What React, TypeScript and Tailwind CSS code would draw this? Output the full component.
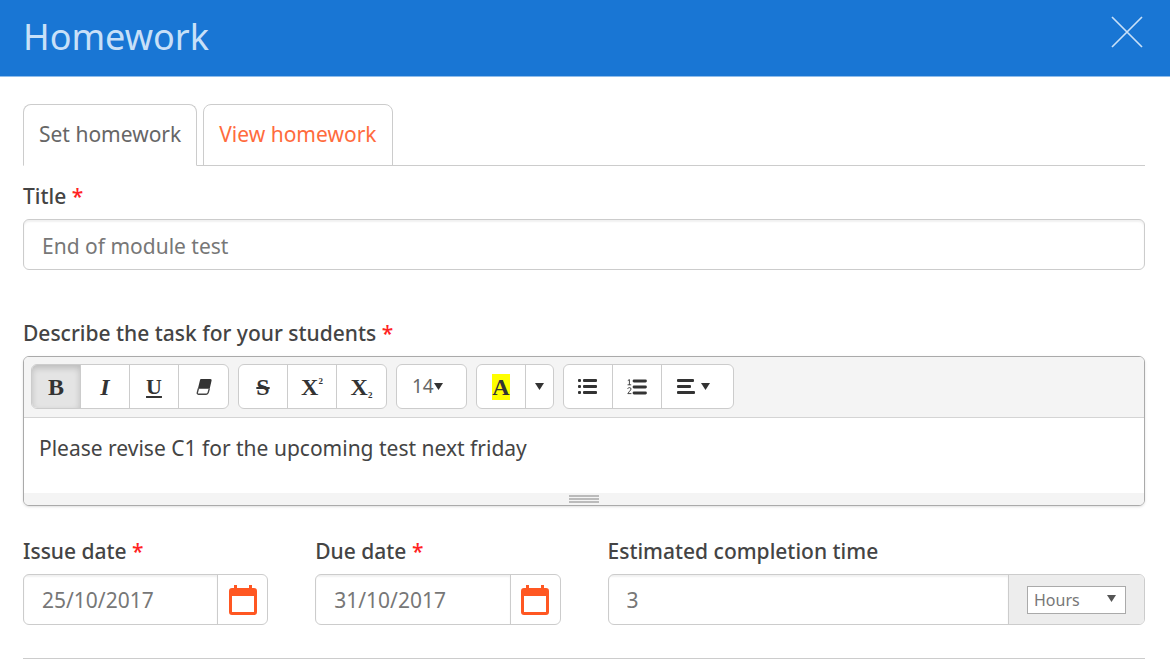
import { useState } from "react";
import type { ReactNode } from "react";
import clsx from "clsx";

function Label({
  htmlFor,
  required,
  children,
}: {
  htmlFor: string;
  required?: boolean;
  children: ReactNode;
}) {
  return (
    <label
      htmlFor={htmlFor}
      className="mb-[9px] block text-[21px] leading-7 font-medium whitespace-nowrap text-[#444]"
    >
      {children}
      {required && <span className="text-[#f22]"> *</span>}
    </label>
  );
}

function ToolGroup({ children }: { children: ReactNode }) {
  return (
    <div className="flex h-[45px] divide-x divide-[#ccc] overflow-hidden rounded-md border border-[#ccc] bg-white">
      {children}
    </div>
  );
}

function ToolButton({
  label,
  active,
  className = "w-[49px] justify-center",
  onClick,
  children,
}: {
  label: string;
  active?: boolean;
  className?: string;
  onClick?: () => void;
  children: ReactNode;
}) {
  return (
    <button
      type="button"
      aria-label={label}
      aria-pressed={active}
      onClick={onClick}
      className={clsx(
        "flex items-center text-[#333]",
        className,
        active && "bg-[#e4e4e4] shadow-[inset_0_3px_6px_rgba(0,0,0,0.18)]"
      )}
    >
      {children}
    </button>
  );
}

function Caret() {
  return (
    <svg width="9" height="7" viewBox="0 0 9 7" fill="currentColor">
      <path d="M0 0h9L4.5 7z" />
    </svg>
  );
}

function EraserIcon() {
  return (
    <svg width="16" height="18" viewBox="0 0 16 18" fill="none">
      <path d="M5 1h9.4q1.6 0 1.2 1.6l-1.9 8.2H1.9l2-8.4Q4.200 1 5 1z" fill="#333" />
      <path
        d="M2.400 10.500 1.400 14.400q-.5 1.800 1 1.800h7.800q1.500 0 2-1.600l1.100-4"
        stroke="#444"
        strokeWidth="1.400"
      />
    </svg>
  );
}

function BulletListIcon() {
  return (
    <svg width="20" height="16" viewBox="0 0 20 16" fill="currentColor">
      <rect x="0" y="0" width="3" height="3" rx="1" />
      <rect x="0" y="6" width="3" height="3" rx="1" />
      <rect x="0" y="12" width="3" height="3" rx="1" />
      <rect x="5" y="0" width="14" height="3" rx="1" />
      <rect x="5" y="6" width="14" height="3" rx="1" />
      <rect x="5" y="12" width="14" height="3" rx="1" />
    </svg>
  );
}

function NumberListIcon() {
  return (
    <svg width="20" height="16" viewBox="0 0 20 16" fill="none" stroke="currentColor">
      <path d="M7 2h11.500M7 8h11.500M7 14h11.500" strokeWidth="2.8" strokeLinecap="round" />
      <path d="M.8 1.6 2.4.6v5.2M.6 5.8h3.6" strokeWidth="0.9" />
      <path d="M.6 9.8q.6-1.2 1.8-1.2 1.6 0 1.6 1.4 0 .9-1.4 2.2L.8 14.6h3.6" strokeWidth="0.9" />
    </svg>
  );
}

function AlignIcon() {
  return (
    <svg width="18" height="15" viewBox="0 0 18 15" fill="currentColor">
      <rect x="0" y="0" width="17" height="3" rx="1" />
      <rect x="0" y="6" width="14" height="3" rx="1" />
      <rect x="0" y="12" width="18" height="3" rx="1" />
    </svg>
  );
}

function CalendarIcon() {
  return (
    <svg width="28" height="32" viewBox="0 0 28 32" fill="none">
      <path
        d="M5 1h3v3h12V1h3v3h2q3 0 3 3v21q0 3-3 3H3q-3 0-3-3V7q0-3 3-3h2zM3 12v16h22V12z"
        fill="#ff5722"
        fillRule="evenodd"
      />
    </svg>
  );
}

function DateField({ id, label, initial }: { id: string; label: string; initial: string }) {
  const [value, setValue] = useState(initial);

  return (
    <div>
      <Label htmlFor={id} required>
        {label}
      </Label>
      <div className="flex h-[51px] overflow-hidden rounded-md border border-[#ccc]">
        <input
          id={id}
          type="text"
          value={value}
          onChange={(e) => setValue(e.target.value)}
          className="min-w-0 flex-1 px-[18px] pt-[2px] text-[21px] text-[#777] shadow-[inset_0_2px_2px_rgba(0,0,0,0.06)] outline-none"
        />
        <button
          type="button"
          aria-label={`Choose ${label.toLowerCase()}`}
          className="flex w-[50px] items-center justify-center border-l border-[#ccc]"
        >
          <CalendarIcon />
        </button>
      </div>
    </div>
  );
}

export default function App() {
  const [tab, setTab] = useState("set");
  const [title, setTitle] = useState("End of module test");
  const [task, setTask] = useState("Please revise C1 for the upcoming test next friday");
  const [hours, setHours] = useState("3");
  const [bold, setBold] = useState(true);

  return (
    <div className="min-h-screen bg-white font-['Noto_Sans','Open_Sans',sans-serif]">
      <header className="mr-px flex h-[77px] items-start justify-between border-b border-[#8fbdeb] bg-[#1976d4] pr-[27px] pl-[23px]">
        <h1 className="pt-[13px] text-[36px] leading-[48px] text-[#c8e0f8]">Homework</h1>
        <button type="button" aria-label="Close" className="mt-4">
          <svg width="32" height="32" viewBox="0 0 32 32" stroke="#c8e0f8" strokeWidth="1.7">
            <path d="M1 1l30 30M31 1L1 31" />
          </svg>
        </button>
      </header>

      <form className="pt-[27px] pr-[26px] pl-[23px]" onSubmit={(e) => e.preventDefault()}>
        <div role="tablist" className="flex gap-[6px] border-b border-[#ccc]">
          {[
            { id: "set", name: "Set homework" },
            { id: "view", name: "View homework" },
          ].map((t) => (
            <button
              key={t.id}
              type="button"
              role="tab"
              aria-selected={tab === t.id}
              onClick={() => setTab(t.id)}
              className={clsx(
                "-mb-px h-[62px] rounded-t-lg border border-[#ccc] px-[15px] text-[21px]",
                tab === t.id ? "border-b-white text-[#666]" : "text-[#ff6b3d]"
              )}
            >
              {t.name}
            </button>
          ))}
        </div>

        <div className="mt-4">
          <Label htmlFor="title" required>
            Title
          </Label>
          <input
            id="title"
            type="text"
            value={title}
            onChange={(e) => setTitle(e.target.value)}
            className="block h-[51px] w-full rounded-md border border-[#ccc] px-[18px] pt-[2px] text-[21px] text-[#777] shadow-[inset_0_2px_2px_rgba(0,0,0,0.06)] outline-none"
          />
        </div>

        <div className="mt-[49px]">
          <Label htmlFor="task" required>
            Describe the task for your students
          </Label>
          <div className="overflow-hidden rounded-md border border-[#aaa] shadow-sm">
            <div className="flex flex-wrap gap-[9px] border-b border-[#d4d4d4] bg-[#f4f4f4] px-[7px] pt-[7px] pb-2">
              <ToolGroup>
                <ToolButton label="Bold" active={bold} onClick={() => setBold(!bold)}>
                  <b className="font-['Liberation_Serif',serif] text-[24px]">B</b>
                </ToolButton>
                <ToolButton label="Italic">
                  <i className="font-['Liberation_Serif',serif] text-[24px] font-bold">I</i>
                </ToolButton>
                <ToolButton label="Underline">
                  <u className="font-['Liberation_Serif',serif] text-[22px] font-bold">U</u>
                </ToolButton>
                <ToolButton label="Remove font style">
                  <EraserIcon />
                </ToolButton>
              </ToolGroup>
              <ToolGroup>
                <ToolButton label="Strikethrough">
                  <s className="font-['Liberation_Serif',serif] text-[24px] font-bold">S</s>
                </ToolButton>
                <ToolButton label="Superscript">
                  <span className="flex font-['Liberation_Serif',serif] text-[24px] leading-7 font-bold">
                    X<span className="text-[9px] leading-4">2</span>
                  </span>
                </ToolButton>
                <ToolButton label="Subscript">
                  <span className="flex items-end font-['Liberation_Serif',serif] text-[24px] leading-7 font-bold">
                    X<span className="text-[9px] leading-3">2</span>
                  </span>
                </ToolButton>
              </ToolGroup>
              <ToolGroup>
                <ToolButton label="Font size" className="w-[69px] pl-[15px]">
                  <span className="text-[19px] text-[#666]">14</span>
                  <Caret />
                </ToolButton>
              </ToolGroup>
              <ToolGroup>
                <ToolButton label="Recent colour">
                  <b className="bg-[#ff0] font-['Liberation_Serif',serif] text-[24px] leading-[26px]">
                    A
                  </b>
                </ToolButton>
                <ToolButton label="More colours" className="w-[27px] justify-center">
                  <Caret />
                </ToolButton>
              </ToolGroup>
              <ToolGroup>
                <ToolButton label="Unordered list">
                  <BulletListIcon />
                </ToolButton>
                <ToolButton label="Ordered list">
                  <NumberListIcon />
                </ToolButton>
                <ToolButton label="Paragraph" className="w-[71px] gap-[6px] pl-[15px]">
                  <AlignIcon />
                  <Caret />
                </ToolButton>
              </ToolGroup>
            </div>
            <textarea
              id="task"
              value={task}
              onChange={(e) => setTask(e.target.value)}
              className="block h-[75px] w-full resize-none px-[15px] pt-4 text-[21px] leading-7 text-[#444] outline-none"
            />
            <div className="flex h-[12px] flex-col items-center justify-center gap-px bg-[#f4f4f4]">
              <span className="h-[2px] w-[30px] bg-[#bbb]" />
              <span className="h-[2px] w-[30px] bg-[#bbb]" />
              <span className="h-[2px] w-[30px] bg-[#bbb]" />
            </div>
          </div>
        </div>

        <div className="mt-[31px] grid grid-cols-4 gap-[47px]">
          <DateField id="issue-date" label="Issue date" initial="25/10/2017" />
          <DateField id="due-date" label="Due date" initial="31/10/2017" />
          <div className="col-span-2">
            <Label htmlFor="completion-time">Estimated completion time</Label>
            <div className="flex h-[51px] overflow-hidden rounded-md border border-[#ccc]">
              <input
                id="completion-time"
                type="text"
                value={hours}
                onChange={(e) => setHours(e.target.value)}
                className="min-w-0 flex-1 px-[18px] pt-[2px] text-[21px] text-[#777] shadow-[inset_0_2px_2px_rgba(0,0,0,0.06)] outline-none"
              />
              <div className="flex items-center border-l border-[#ccc] bg-[#ededed] px-[18px]">
                <div className="relative">
                  <select
                    aria-label="Time unit"
                    className="block h-7 w-[99px] appearance-none border border-[#aaa] bg-white pl-[6px] text-[16px] leading-6 text-[#777] outline-none"
                  >
                    <option>Hours</option>
                    <option>Days</option>
                  </select>
                  <span className="pointer-events-none absolute top-[9px] right-[10px] text-[#555]">
                    <Caret />
                  </span>
                </div>
              </div>
            </div>
          </div>
        </div>

        <hr className="mt-[33px] border-t border-[#ccc]" />
      </form>
    </div>
  );
}
